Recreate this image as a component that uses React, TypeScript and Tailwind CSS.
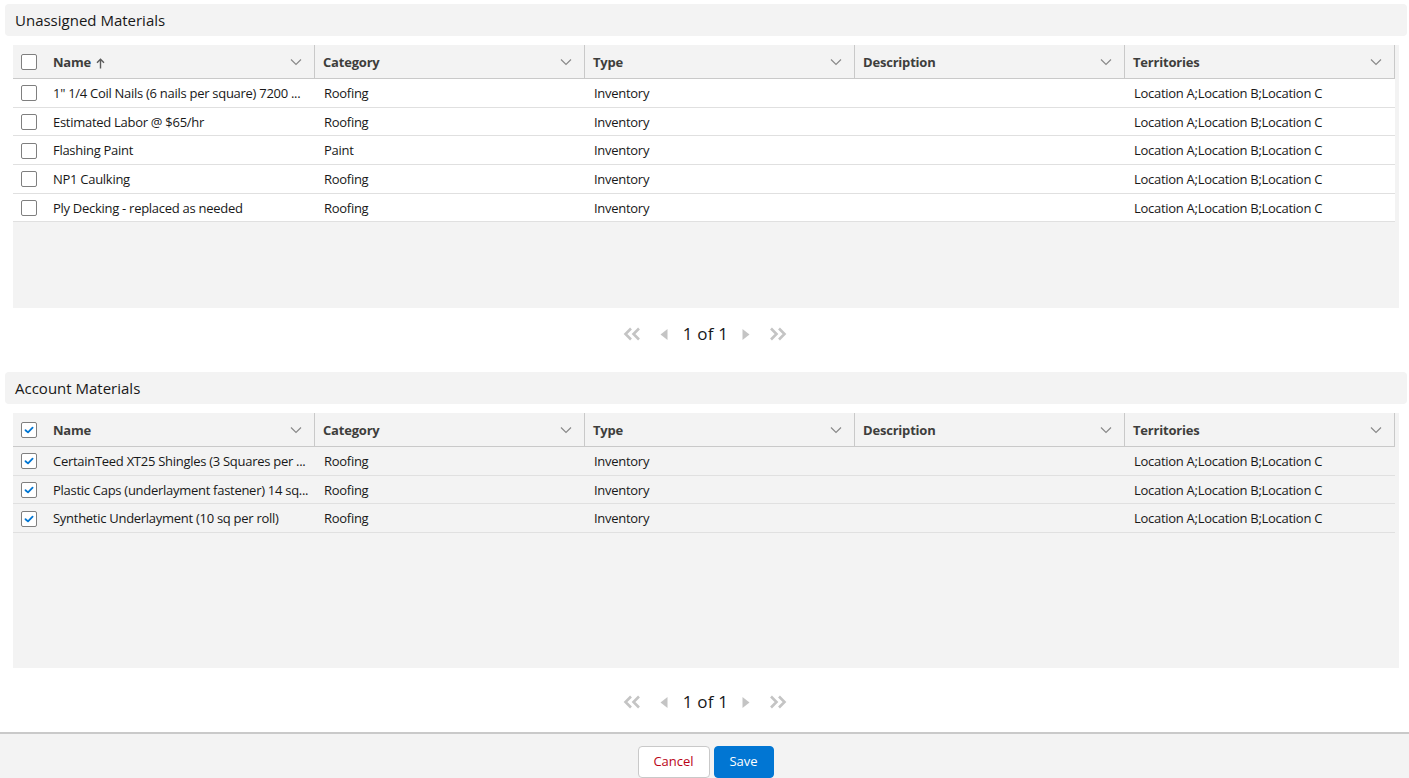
import React from "react";

const FONT = { fontFamily: '"Segoe UI", "Open Sans", "Noto Sans", sans-serif' };

type Row = { name: string; category: string; type: string; description: string; territories: string };

const unassigned: Row[] = [
  { name: '1" 1/4 Coil Nails (6 nails per square) 7200 ...', category: "Roofing", type: "Inventory", description: "", territories: "Location A;Location B;Location C" },
  { name: "Estimated Labor @ $65/hr", category: "Roofing", type: "Inventory", description: "", territories: "Location A;Location B;Location C" },
  { name: "Flashing Paint", category: "Paint", type: "Inventory", description: "", territories: "Location A;Location B;Location C" },
  { name: "NP1 Caulking", category: "Roofing", type: "Inventory", description: "", territories: "Location A;Location B;Location C" },
  { name: "Ply Decking - replaced as needed", category: "Roofing", type: "Inventory", description: "", territories: "Location A;Location B;Location C" },
];

const account: Row[] = [
  { name: "CertainTeed XT25 Shingles (3 Squares per ...", category: "Roofing", type: "Inventory", description: "", territories: "Location A;Location B;Location C" },
  { name: "Plastic Caps (underlayment fastener) 14 sq...", category: "Roofing", type: "Inventory", description: "", territories: "Location A;Location B;Location C" },
  { name: "Synthetic Underlayment (10 sq per roll)", category: "Roofing", type: "Inventory", description: "", territories: "Location A;Location B;Location C" },
];

function Checkbox({ checked }: { checked?: boolean }) {
  return (
    <div className="w-[16px] h-[16px] rounded-[2px] border border-[#7f7f7f] bg-white flex items-center justify-center">
      {checked && (
        <svg width="10" height="8" viewBox="0 0 10 8">
          <path d="M1.5 4.2 L4 6.4 L8.6 1.6" fill="none" stroke="#0176d3" strokeWidth="1.8" strokeLinecap="round" strokeLinejoin="round" />
        </svg>
      )}
    </div>
  );
}

function Chevron() {
  return (
    <svg width="12" height="8" viewBox="0 0 12 8" className="shrink-0">
      <path d="M1 1.5 L6 6.5 L11 1.5" fill="none" stroke="#8a8a8a" strokeWidth="1.2" />
    </svg>
  );
}

function SortUp() {
  return (
    <svg width="9" height="11" viewBox="0 0 9 11" className="ml-[5px] mt-[1px]">
      <path d="M4.5 10.5 V1.5 M1 4.8 L4.5 1.2 L8 4.8" fill="none" stroke="#5c5c5c" strokeWidth="1.4" />
    </svg>
  );
}

const COLS = "grid grid-cols-[32px_270px_270px_270px_270px_270px]";

function HeaderCell({ label, sort }: { label: string; sort?: boolean }) {
  return (
    <div className="h-full flex items-center border-r border-[#c9c9c9] pl-[8px] pr-[12px]">
      <div className="flex-1 flex items-center pt-[2px] text-[13px] font-bold tracking-[-0.2px] text-[#3e3e3c]">
        {label}
        {sort && <SortUp />}
      </div>
      <Chevron />
    </div>
  );
}

function Cell({ children, first }: { children?: React.ReactNode; first?: boolean }) {
  return (
    <div
      className={`h-full flex items-center pt-[2px] ${first ? "pl-[8px]" : "pl-[9px]"} pr-[4px] text-[13px] tracking-[-0.28px] text-[#181818] whitespace-nowrap overflow-hidden`}
    >
      {children}
    </div>
  );
}

function DataTable({ rows, checked, height }: { rows: Row[]; checked: boolean; height: string }) {
  const rowBg = checked ? "bg-[#f3f3f3]" : "bg-white";
  return (
    <div className={`mx-[8px] bg-[#f3f3f3] ${height}`}>
      <div className="w-[1382px]">
        <div className={`${COLS} h-[34px] border-b border-[#c9c9c9]`}>
          <div className="flex items-center pl-[8px]">
            <Checkbox checked={checked} />
          </div>
          <HeaderCell label="Name" sort={!checked} />
          <HeaderCell label="Category" />
          <HeaderCell label="Type" />
          <HeaderCell label="Description" />
          <HeaderCell label="Territories" />
        </div>
        {rows.map((r, i) => (
          <div key={i} className={`${COLS} h-[28.7px] border-b border-[#e0e0e0] ${rowBg}`}>
            <div className="flex items-center pl-[8px] pt-[1px]">
              <Checkbox checked={checked} />
            </div>
            <Cell first>{r.name}</Cell>
            <Cell>{r.category}</Cell>
            <Cell>{r.type}</Cell>
            <Cell>{r.description}</Cell>
            <Cell>{r.territories}</Cell>
          </div>
        ))}
      </div>
    </div>
  );
}

function Pagination({ className }: { className: string }) {
  const c = "#c4c4c4";
  return (
    <div className={`flex justify-center ${className}`}>
      <div className="flex items-center h-[20px] mr-[2px]">
        <svg width="20" height="14" viewBox="0 0 20 14">
          <path d="M9 1.5 L3.5 7 L9 12.5 M17 1.5 L11.5 7 L17 12.5" fill="none" stroke={c} strokeWidth="2.6" />
        </svg>
        <svg width="10" height="13" viewBox="0 0 10 13" className="ml-[17px]">
          <path d="M8.5 1 L1.5 6.5 L8.5 12 Z" fill={c} />
        </svg>
        <span className="ml-[14px] text-[17px] tracking-[0.2px] text-[#181818] leading-[20px]">1 of 1</span>
        <svg width="10" height="13" viewBox="0 0 10 13" className="ml-[13px]">
          <path d="M1.5 1 L8.5 6.5 L1.5 12 Z" fill={c} />
        </svg>
        <svg width="20" height="14" viewBox="0 0 20 14" className="ml-[17px]">
          <path d="M3 1.5 L8.5 7 L3 12.5 M11 1.5 L16.5 7 L11 12.5" fill="none" stroke={c} strokeWidth="2.6" />
        </svg>
      </div>
    </div>
  );
}

function SectionHeader({ title, className }: { title: string; className?: string }) {
  return (
    <div className={`h-[32px] rounded-[4px] bg-[#f3f3f3] flex items-center pt-[1px] px-[10px] text-[15px] text-[#181818] ${className ?? ""}`}>
      {title}
    </div>
  );
}

export default function App() {
  return (
    <div className="w-[1409px] h-[778px] overflow-hidden bg-white" style={FONT}>
      <div className="pl-[5px] pr-[2px] pt-[4px]">
        <SectionHeader title="Unassigned Materials" />
        <div className="mt-[9px]">
          <DataTable rows={unassigned} checked={false} height="h-[263px]" />
        </div>
        <Pagination className="h-[52px] pt-[16px]" />
        <SectionHeader title="Account Materials" className="mt-[12px]" />
        <div className="mt-[9px]">
          <DataTable rows={account} checked={true} height="h-[255px]" />
        </div>
        <Pagination className="h-[64px] pt-[24px]" />
      </div>
      <div className="border-t-2 border-[#c9c9c9] bg-[#f3f3f3] h-[46px] flex justify-center pt-[12px] pl-[2px] gap-[4px]">
        <button className="h-[32px] w-[72px] rounded-[4px] border border-[#c9c9c9] bg-white text-[13px] text-[#ba0517] shrink-0">
          Cancel
        </button>
        <button className="h-[32px] w-[60px] rounded-[4px] border border-[#0176d3] bg-[#0176d3] text-[13px] text-white shrink-0">
          Save
        </button>
      </div>
    </div>
  );
}
